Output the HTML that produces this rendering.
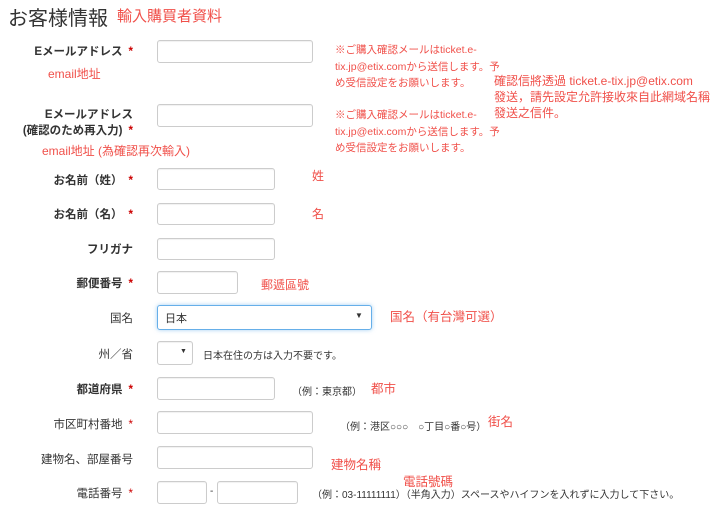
<!DOCTYPE html>
<html><head><meta charset="utf-8"><style>
body{margin:0;width:720px;height:509px;background:#fff;position:relative;overflow:hidden;font-family:"Liberation Sans","Noto Sans CJK JP",sans-serif;color:#333}
.a{position:absolute;white-space:nowrap}
.r{color:#f0504a}
.lb{position:absolute;right:587px;font-size:11.5px;font-weight:bold;color:#333;white-space:nowrap;text-align:right}
.st{color:#c00;margin-left:6px}
.in{position:absolute;border:1px solid #ccc;border-radius:3px;box-sizing:border-box;background:#fff;box-shadow:inset 0 1px 1px rgba(0,0,0,.06)}
.n{font-size:10.5px;line-height:16.5px}
.s{font-size:10px;color:#333}
</style></head><body>
<div class="a" style="left:8px;top:2px;font-size:20px;color:#333">お客様情報</div>
<div class="a r" style="left:117px;top:5px;font-size:15px">輸入購買者資料</div>

<div class="lb" style="top:43px">Eメールアドレス<span class="st">*</span></div>
<div class="in" style="left:157px;top:40px;width:156px;height:23px"></div>
<div class="a r" style="left:48px;top:65px;font-size:12px">email地址</div>
<div class="a r n" style="left:335px;top:42px">※ご購入確認メールはticket.e-<br>tix.jp@etix.comから送信します。予<br>め受信設定をお願いします。</div>
<div class="a r" style="left:494px;top:73px;font-size:12px;line-height:16px">確認信將透過 ticket.e-tix.jp@etix.com<br>發送，請先設定允許接收來自此網域名稱<br>發送之信件。</div>

<div class="lb" style="top:107px;line-height:16px">Eメールアドレス<br>(確認のため再入力)<span class="st">*</span></div>
<div class="in" style="left:157px;top:104px;width:156px;height:23px"></div>
<div class="a r" style="left:42px;top:142px;font-size:12px">email地址 (為確認再次輸入)</div>
<div class="a r n" style="left:335px;top:107px">※ご購入確認メールはticket.e-<br>tix.jp@etix.comから送信します。予<br>め受信設定をお願いします。</div>

<div class="lb" style="top:172px">お名前（姓）<span class="st">*</span></div>
<div class="in" style="left:157px;top:168px;width:118px;height:22px"></div>
<div class="a r" style="left:312px;top:167px;font-size:12px">姓</div>

<div class="lb" style="top:206px">お名前（名）<span class="st">*</span></div>
<div class="in" style="left:157px;top:203px;width:118px;height:22px"></div>
<div class="a r" style="left:312px;top:205px;font-size:12px">名</div>

<div class="lb" style="top:241px">フリガナ</div>
<div class="in" style="left:157px;top:238px;width:118px;height:22px"></div>

<div class="lb" style="top:275px">郵便番号<span class="st">*</span></div>
<div class="in" style="left:157px;top:271px;width:81px;height:23px"></div>
<div class="a r" style="left:261px;top:276px;font-size:12px">郵遞區號</div>

<div class="lb" style="top:310px;font-weight:normal">国名</div>
<div class="in" style="left:157px;top:305px;width:215px;height:25px;border-color:#66afe9;box-shadow:0 0 4px rgba(102,175,233,.6)"></div>
<div class="a" style="left:165px;top:310px;font-size:11px">日本</div>
<div class="a" style="left:355px;top:311px;font-size:8px">▼</div>
<div class="a r" style="left:390px;top:306px;font-size:12.5px">国名（有台灣可選）</div>

<div class="lb" style="top:346px;font-weight:normal">州／省</div>
<div class="in" style="left:157px;top:341px;width:36px;height:24px"></div>
<div class="a" style="left:180px;top:348px;font-size:7px">▼</div>
<div class="a s" style="left:203px;top:347px">日本在住の方は入力不要です。</div>

<div class="lb" style="top:381px">都道府県<span class="st">*</span></div>
<div class="in" style="left:157px;top:377px;width:118px;height:23px"></div>
<div class="a s" style="left:292px;top:383px">（例：東京都）</div>
<div class="a r" style="left:371px;top:378px;font-size:12.5px">都市</div>

<div class="lb" style="top:416px;font-weight:normal">市区町村番地<span class="st">*</span></div>
<div class="in" style="left:157px;top:411px;width:156px;height:23px"></div>
<div class="a s" style="left:340px;top:418px">（例：港区○○○　○丁目○番○号）</div>
<div class="a r" style="left:488px;top:411px;font-size:12.5px">街名</div>

<div class="lb" style="top:451px;font-weight:normal">建物名、部屋番号</div>
<div class="in" style="left:157px;top:446px;width:156px;height:23px"></div>
<div class="a r" style="left:331px;top:454px;font-size:12.5px">建物名稱</div>

<div class="lb" style="top:485px;font-weight:normal">電話番号<span class="st">*</span></div>
<div class="in" style="left:157px;top:481px;width:50px;height:23px"></div>
<div class="a" style="left:210px;top:486px;font-size:10px">-</div>
<div class="in" style="left:217px;top:481px;width:81px;height:23px"></div>
<div class="a r" style="left:403px;top:471px;font-size:12.5px">電話號碼</div>
<div class="a s" style="left:312px;top:486px">（例：03-11111111）（半角入力）スペースやハイフンを入れずに入力して下さい。</div>
</body></html>
